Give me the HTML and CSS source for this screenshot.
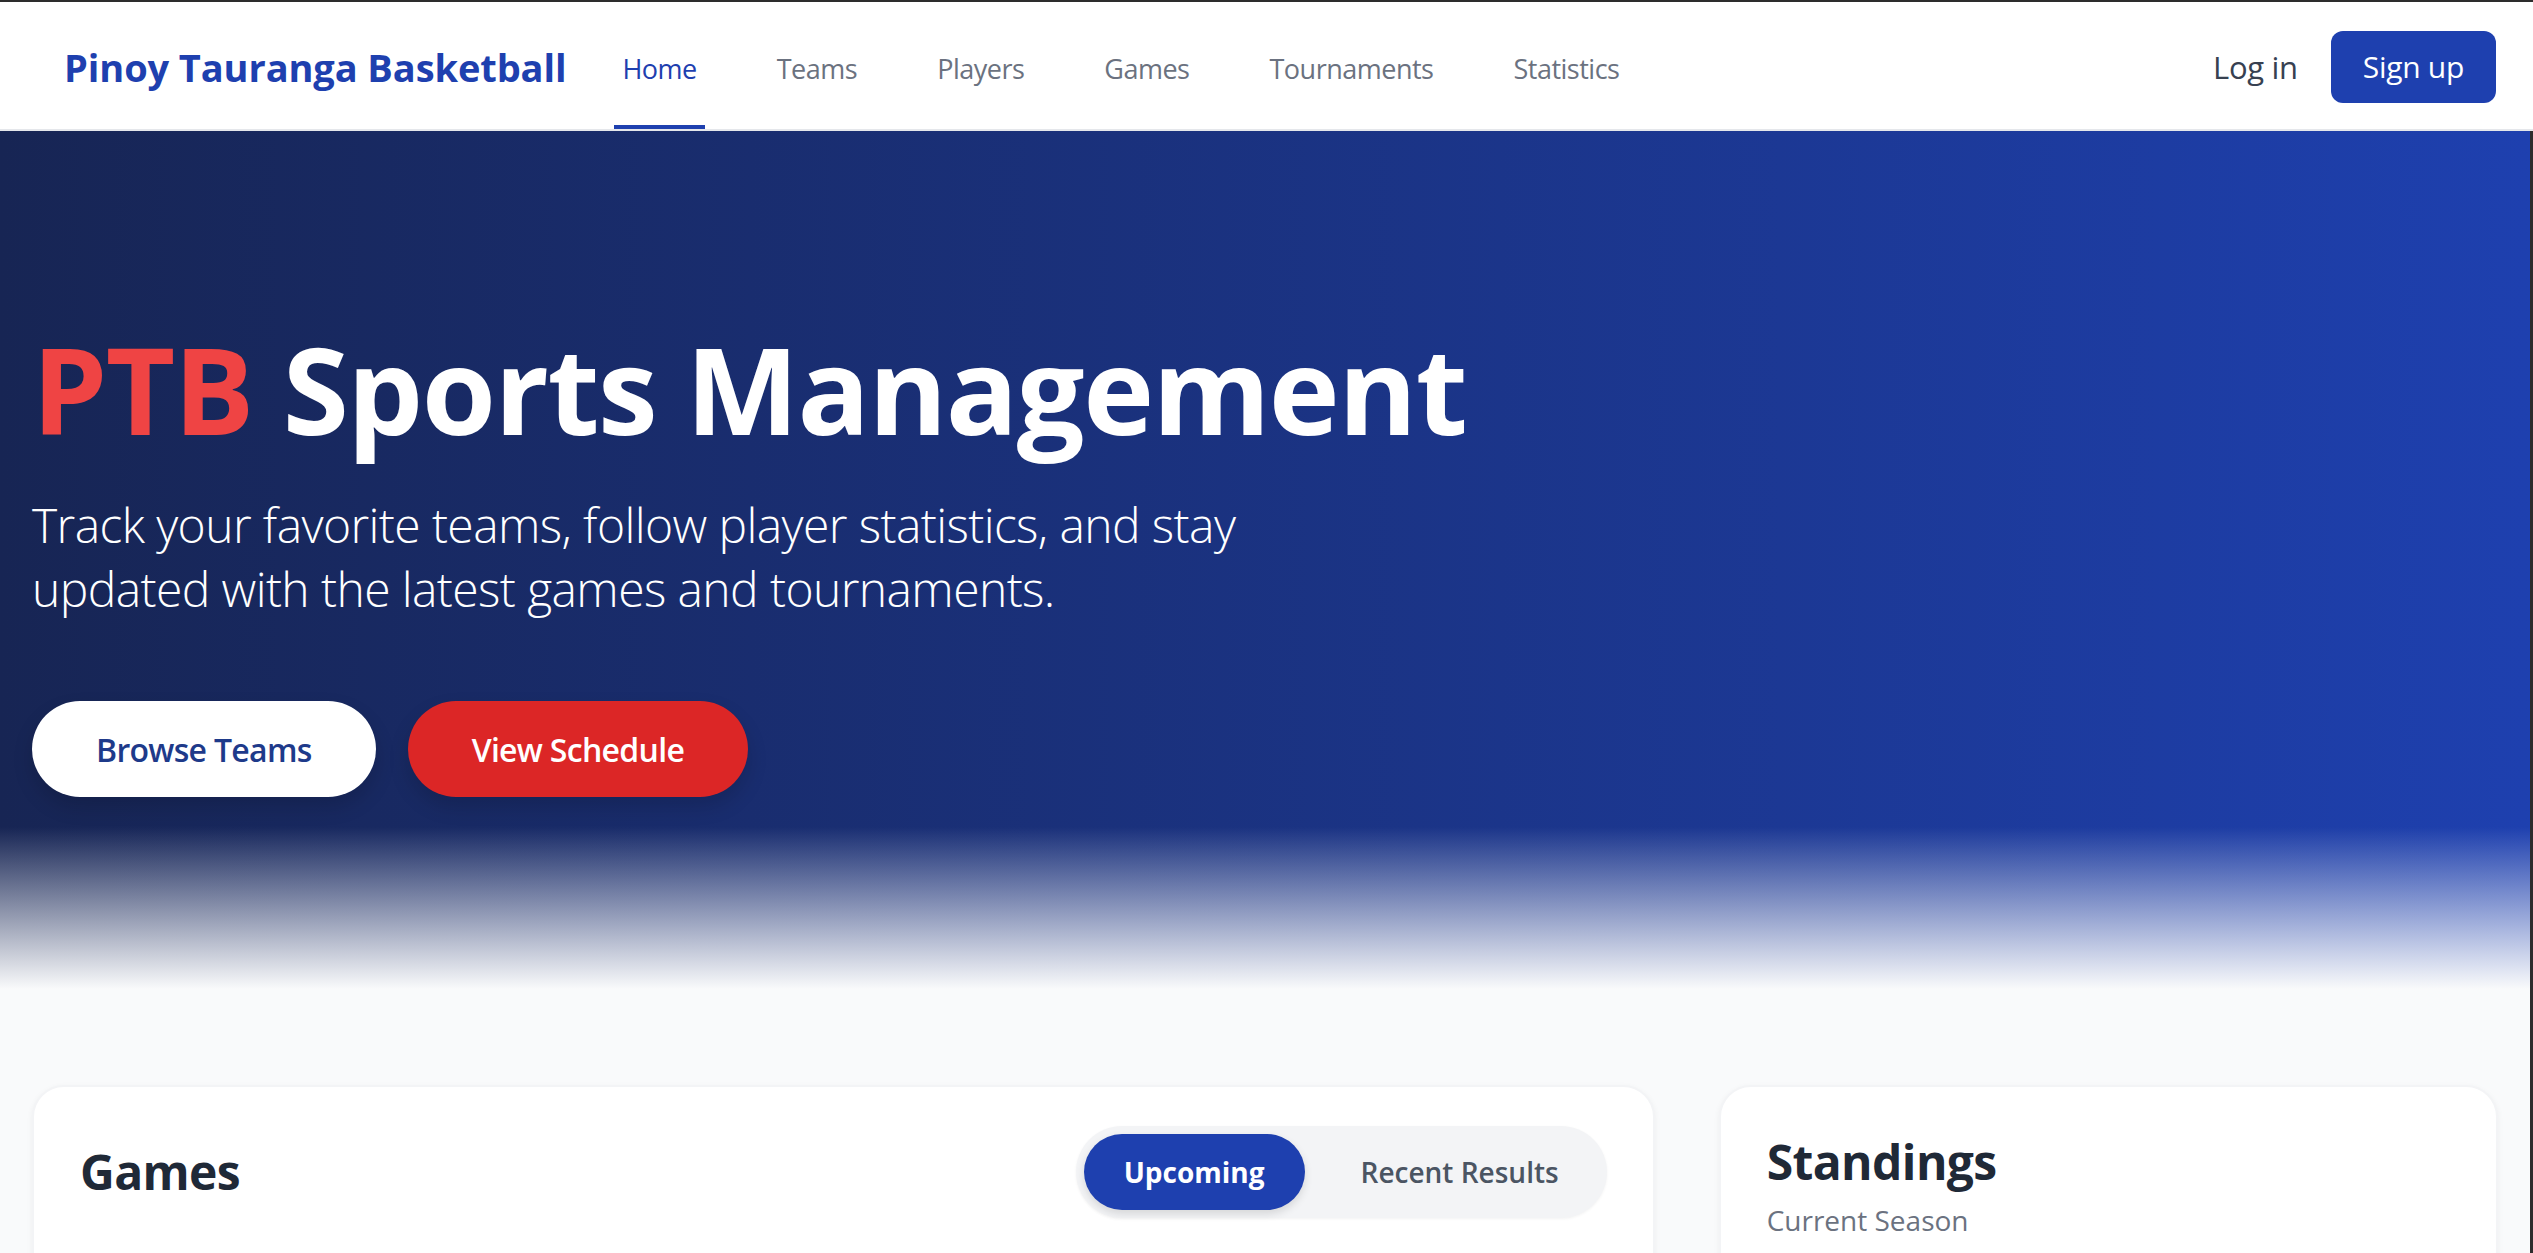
FILE: index.html
```html
<!DOCTYPE html>
<html lang="en">
<head>
<meta charset="utf-8">
<title>Pinoy Tauranga Basketball</title>
<link rel="stylesheet" href="styles.css">
</head>
<body>
<nav class="navbar">
  <div class="nav-left">
    <a class="brand" href="#">Pinoy Tauranga Basketball</a>
    <div class="nav-links">
      <a class="nav-link active" href="#">Home</a>
      <a class="nav-link" href="#">Teams</a>
      <a class="nav-link" href="#">Players</a>
      <a class="nav-link" href="#">Games</a>
      <a class="nav-link" href="#">Tournaments</a>
      <a class="nav-link" href="#">Statistics</a>
    </div>
  </div>
  <div class="nav-right">
    <a class="login" href="#">Log in</a>
    <a class="signup" href="#">Sign up</a>
  </div>
</nav>
<div class="page">
  <section class="hero">
    <div class="hero-inner">
      <h1 class="hero-title"><span class="accent">PTB</span> Sports Management</h1>
      <p class="hero-text">Track your favorite teams, follow player statistics, and stay updated with the latest games and tournaments.</p>
      <div class="hero-actions">
        <a class="btn btn-light" href="#">Browse Teams</a>
        <a class="btn btn-red" href="#">View Schedule</a>
      </div>
    </div>
  </section>
  <main class="content">
    <section class="card games-card">
      <div class="card-header">
        <h2 class="card-title">Games</h2>
        <div class="tabs">
          <button class="tab active">Upcoming</button>
          <button class="tab">Recent Results</button>
        </div>
      </div>
    </section>
    <aside class="card standings-card">
      <h2 class="card-title standings-title">Standings</h2>
      <p class="card-sub">Current Season</p>
    </aside>
  </main>
</div>
</body>
</html>
```
FILE: styles.css
```css
* { box-sizing: border-box; }
html, body { margin: 0; padding: 0; }
body {
  background: #f9fafb;
  font-family: "Open Sans", "Noto Sans", sans-serif;
  border-top: 2px solid #2d2d2d;
  color: #1f2937;
}
a { text-decoration: none; }

.navbar {
  display: flex;
  justify-content: space-between;
  align-items: stretch;
  height: 129px;
  background: #fff;
  border-bottom: 2px solid #e5e7eb;
  padding: 0 37px 0 64px;
}
.nav-left { display: flex; align-items: stretch; }
.brand {
  display: flex;
  align-items: center;
  font-size: 38px;
  font-weight: 700;
  color: #1e40af;
  padding-top: 2px;
  letter-spacing: -0.1px;
}
.nav-links { display: flex; margin-left: 48px; gap: 64px; }
.nav-link {
  display: flex;
  align-items: center;
  padding: 9px 8px 0;
  font-size: 27px;
  letter-spacing: -0.5px;
  color: #6b7280;
  border-bottom: 4px solid transparent;
}
.nav-link.active { color: #1e40af; border-bottom-color: #1e40af; }
.nav-right { display: flex; align-items: center; gap: 33px; padding-top: 2px; }
.login { font-size: 31px; letter-spacing: -0.3px; color: #374151; }
.signup {
  font-size: 30px;
  letter-spacing: -0.3px;
  line-height: 48px;
  padding: 12px 32px;
  border-radius: 12px;
  background: #1e40af;
  color: #fff;
}

.page { border-right: 3px solid #2d2d2d; }

.hero {
  background:
    linear-gradient(to bottom, rgba(249,250,251,0) 0, rgba(249,250,251,0) calc(100% - 162px), #f9fafb 100%),
    linear-gradient(to right, #172554, #1e40af);
  padding: 198px 32px 192px;
}
.hero-title {
  margin: 0 0 44px;
  font-size: 120px;
  line-height: 120px;
  font-weight: 700;
  color: #fff;
  letter-spacing: -1.5px;
}
.accent { color: #ef4444; }
.hero-text {
  margin: 0;
  max-width: 1344px;
  font-size: 48px;
  line-height: 64px;
  font-weight: 300;
  letter-spacing: -0.6px;
  color: #fff;
}
.hero-actions { display: flex; gap: 32px; margin-top: 80px; }
.btn {
  display: inline-flex;
  align-items: center;
  justify-content: center;
  height: 96px;
  padding: 0 64px;
  border-radius: 9999px;
  font-size: 32px;
  font-weight: 600;
  letter-spacing: -0.7px;
  box-shadow: 0 10px 20px rgba(0,0,0,0.15);
}
.btn-light { background: #fff; color: #1e3a8a; }
.btn-red { background: #dc2626; color: #fff; }

.content {
  display: grid;
  grid-template-columns: repeat(3, minmax(0, 1fr));
  gap: 64px;
  padding: 96px 32px;
}
.card {
  background: #fff;
  border-radius: 32px;
  border: 2px solid #f3f4f6;
  box-shadow: 0 2px 6px rgba(0,0,0,0.05);
  padding: 39px 46px;
  min-height: 600px;
}
.games-card { grid-column: span 2; }
.card-header { display: flex; justify-content: space-between; align-items: center; }
.card-title {
  margin: 0;
  font-size: 48px;
  line-height: 64px;
  font-weight: 700;
  letter-spacing: -0.6px;
  color: #1f2937;
}
.standings-title { margin-top: 4px; }
.tabs {
  display: flex;
  gap: 16px;
  padding: 8px;
  background: #f3f4f6;
  border-radius: 9999px;
  box-shadow: 0 1px 3px rgba(0,0,0,0.05);
}
.tab {
  height: 76px;
  padding: 0 40px;
  border: 0;
  border-radius: 9999px;
  background: transparent;
  font-family: inherit;
  font-size: 28px;
  font-weight: 600;
  color: #4b5563;
}
.tab.active {
  background: #1e40af;
  color: #fff;
  font-weight: 700;
  box-shadow: 0 4px 8px rgba(0,0,0,0.12);
}
.card-sub {
  margin: 6px 0 0;
  font-size: 28px;
  line-height: 40px;
  color: #6b7280;
}
```
